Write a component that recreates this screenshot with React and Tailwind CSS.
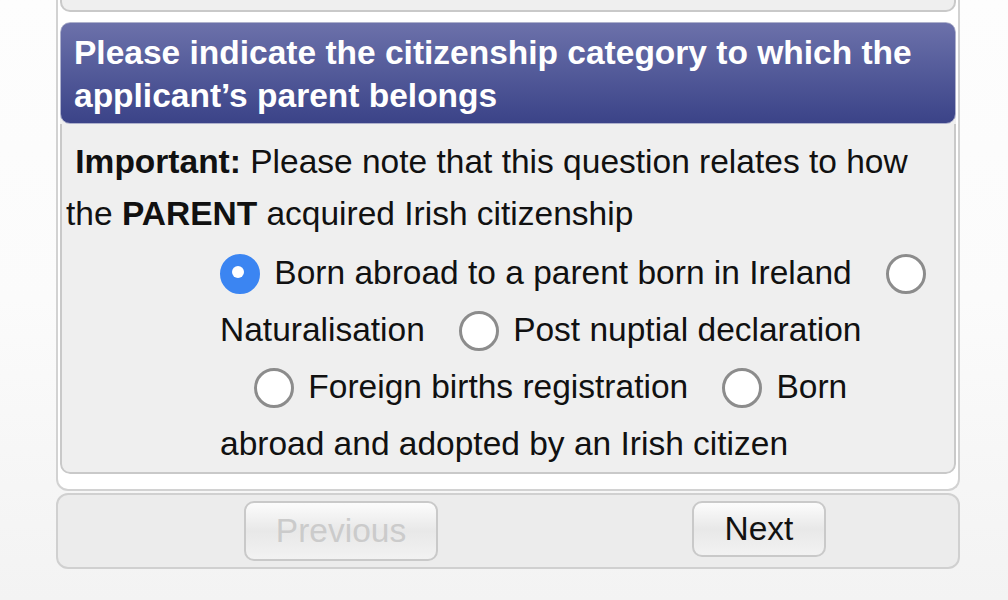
import React from 'react';

const font = { fontFamily: '"Liberation Sans", Arial, Helvetica, sans-serif' };

function Radio({ checked = false, first = false }) {
  return (
    <span
      className={`inline-block align-middle w-[40px] h-[40px] rounded-full mr-[5px] relative -top-[1px] ${
        first ? 'ml-0' : 'ml-[34px]'
      } ${
        checked
          ? 'bg-[#3b85f2] border-[14px] border-[#3b85f2]'
          : 'bg-white border-[3px] border-[#8c8c8c]'
      }`}
    >
      {checked && <span className="block w-[12px] h-[12px] rounded-full bg-white -m-[2px]" />}
    </span>
  );
}

function NavButton({ children, disabled = false, className = '' }) {
  return (
    <button
      disabled={disabled}
      className={`rounded-[10px] border-2 border-[#c9c9c9] bg-gradient-to-b from-[#fcfcfc] via-[#e8e8e8] to-[#f2f2f2] text-[33.5px] leading-none ${
        disabled ? 'text-[#cbcbcb]' : 'text-[#111]'
      } ${className}`}
    >
      {children}
    </button>
  );
}

const options = [
  'Born abroad to a parent born in Ireland',
  'Naturalisation',
  'Post nuptial declaration',
  'Foreign births registration',
  'Born abroad and adopted by an Irish citizen',
];

export default function App() {
  return (
    <div className="w-[1008px] h-[600px] overflow-hidden bg-gradient-to-b from-[#fdfdfd] via-[#fbfbfb] to-[#f3f3f3]" style={font}>
      <div className="ml-[56px] w-[904px] bg-white border-x-2 border-b-2 border-[#d2d2d2] rounded-b-[12px] px-[2px] pb-[15px]">
        <div className="h-[12px] bg-[#efefef] border-x-2 border-b-2 border-[#c9c9c9] rounded-b-[10px]" />

        <div className="mt-[10px] rounded-[10px] overflow-hidden bg-[#efefef]">
          <div className="rounded-[10px] border border-[#aeb1cc] bg-gradient-to-b from-[#6c71aa] to-[#3b4388] pl-[13px] pr-[10px] pt-[8px] pb-[6px] h-[102px]">
            <h2 className="text-white font-bold text-[33.5px] leading-[43px]">
              Please indicate the citizenship category to which the applicant’s parent belongs
            </h2>
          </div>

          <div className="border-x-2 border-b-2 border-[#c9c9c9] rounded-b-[10px]">
            <p className="pl-[4px] pr-[10px] pt-[12px] text-[33.5px] leading-[52px] text-[#111]">
              &nbsp;<b>Important:</b> Please note that this question relates to how the <b>PARENT</b> acquired
              Irish citizenship
            </p>

            <div className="mt-[4px] ml-[158px] w-[716px] text-[33.5px] leading-[57px] text-[#111]">
              {options.map((label, i) => (
                <React.Fragment key={label}>
                  <Radio checked={i === 0} first={i === 0} /> {label}
                </React.Fragment>
              ))}
            </div>
          </div>
        </div>
      </div>

      <div className="mt-[2px] ml-[56px] w-[904px] h-[76px] border-2 border-[#d0d0d0] rounded-[12px] bg-[#ececec] flex items-start pt-[6px]">
        <NavButton disabled className="ml-[186px] w-[194px] h-[60px]">
          Previous
        </NavButton>
        <NavButton className="ml-[254px] w-[134px] h-[56px]">Next</NavButton>
      </div>
    </div>
  );
}
